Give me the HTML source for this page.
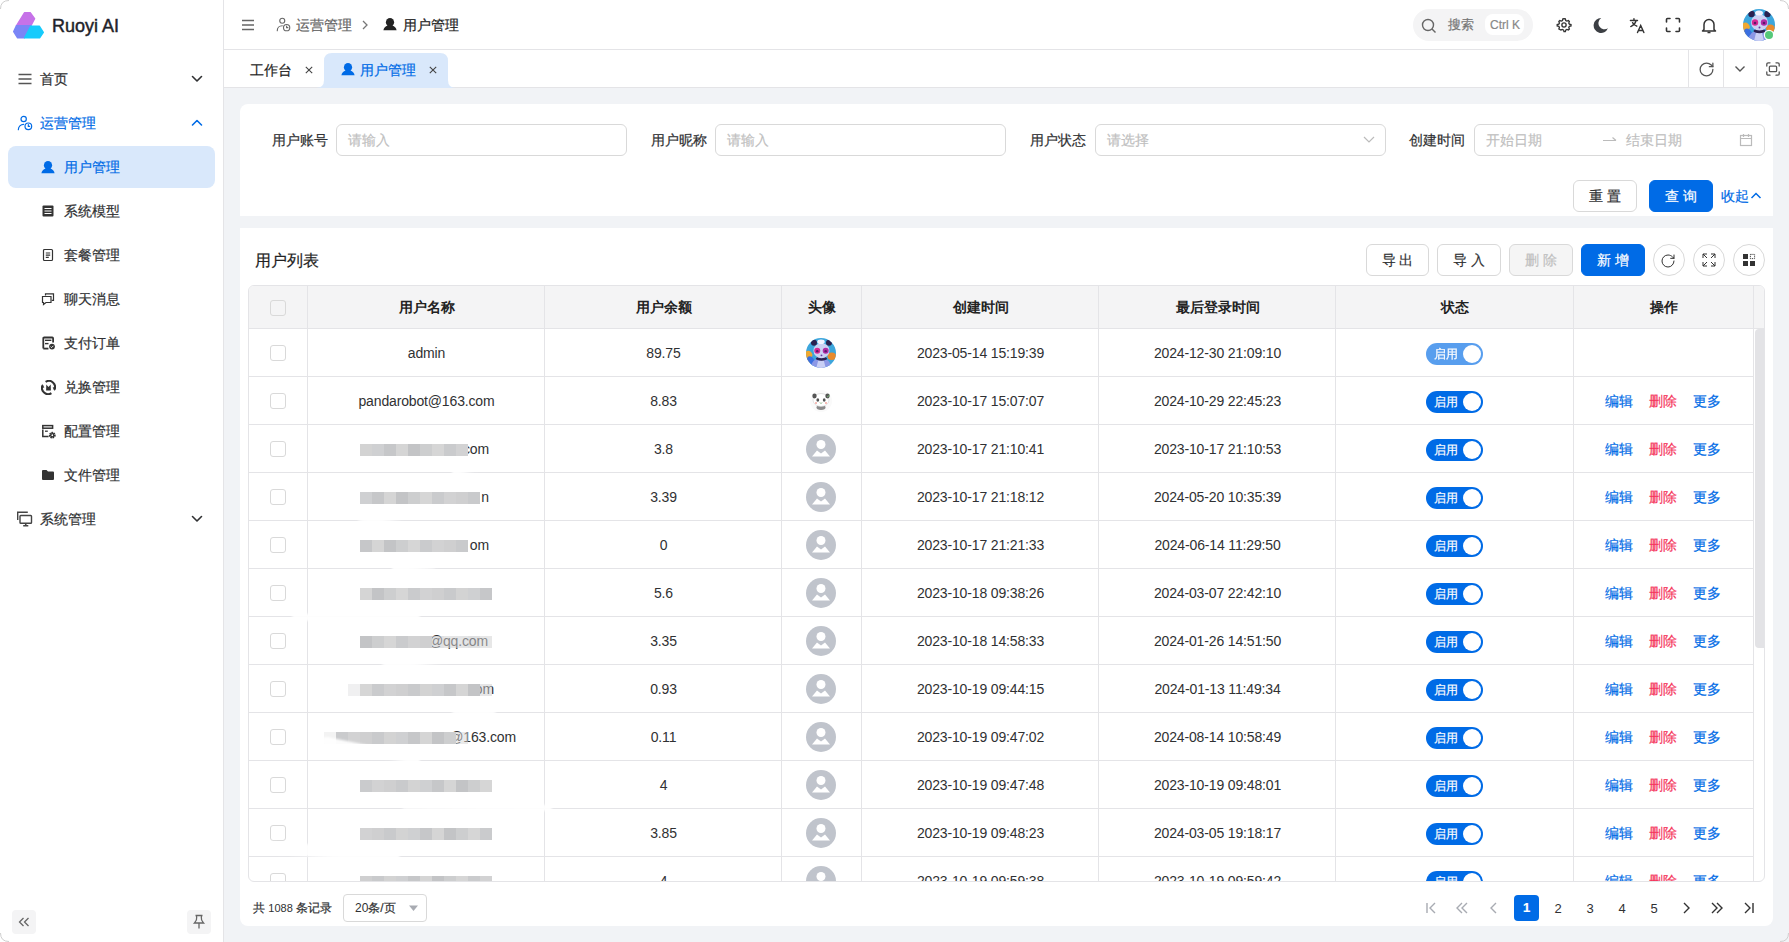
<!DOCTYPE html><html><head><meta charset="utf-8"><style>
*{box-sizing:border-box;margin:0;padding:0}
html,body{width:1789px;height:942px;overflow:hidden;background:#f1f3f6;font-family:"Liberation Sans",sans-serif;font-size:14px;color:#303133;-webkit-text-stroke:0.2px}
.a{position:absolute}
.t{position:absolute;white-space:nowrap;line-height:20px}
.side{left:0;top:0;width:224px;height:942px;background:#fff;border-right:1px solid #e4e4e7}
.hdr{left:224px;top:0;width:1565px;height:50px;background:#fff;border-bottom:1px solid #e4e4e7}
.tabs{left:224px;top:50px;width:1565px;height:38px;background:#fff;border-bottom:1px solid #e4e4e7}
.card{background:#fff}
.inp{position:absolute;height:32px;border:1px solid #d9d9d9;border-radius:6px;background:#fff}
.ph{color:#bfbfbf}
.btn{position:absolute;height:32px;border:1px solid #d9d9d9;border-radius:6px;background:#fff;text-align:center;line-height:30px;font-size:14px;color:#303133}
.btnp{background:#006be6;border-color:#006be6;color:#fff}
.cbtn{position:absolute;width:32px;height:32px;border:1px solid #d9d9d9;border-radius:50%;background:#fff}
.vl{position:absolute;width:1px;background:#e4e4e7}
.hl{position:absolute;height:1px;background:#e4e4e7}
.cb{position:absolute;width:16px;height:16px;border:1px solid #d9d9d9;border-radius:3px;background:#fff}
.cell{position:absolute;text-align:center;white-space:nowrap;line-height:20px}
.sw{position:absolute;width:57px;height:22px;border-radius:11px;background:#006be6}
.sw .k{position:absolute;right:2px;top:2px;width:18px;height:18px;border-radius:50%;background:#fff}
.sw .l{position:absolute;left:8px;top:0;line-height:22px;font-size:12px;color:#fff}
.lnk{position:absolute;white-space:nowrap;line-height:20px;color:#006be6}
.red{color:#f5365c}
.num{letter-spacing:-0.15px;-webkit-text-stroke:0}
.mos{position:absolute;height:12px;display:flex}
.mos i{display:block;width:12px;height:12px}
</style></head><body>
<div class="a side">
<svg class="a" style="left:0;top:0" width="50" height="45" viewBox="0 0 50 45" stroke-linejoin="round">
<path d="M24.6 12.6 L30.2 12.6 L34.6 18.6 L30.9 25.8 L16.4 25.8 Z" fill="#c672e8" stroke="#c672e8" stroke-width="1.4"/>
<path d="M16.4 25.8 L30.9 25.8 L24.2 37.9 L17.6 37.9 L13.7 31.6 Z" fill="#7a85f6" stroke="#7a85f6" stroke-width="1.4"/>
<path d="M30.9 26.2 L39.3 26.2 L43.3 32.3 L39.6 37.9 L24.6 37.9 Z" fill="#16cbfc" stroke="#16cbfc" stroke-width="1.4"/>
</svg>
<div class="t" style="left:52px;top:15px;font-size:18px;line-height:22px;color:#1f2329;-webkit-text-stroke:0.45px">Ruoyi AI</div>
<div class="a" style="left:17px;top:71px;width:16px;height:16px"><svg width="16" height="16" viewBox="0 0 16 16"><path d="M1.5 3.5h13M1.5 8h13M1.5 12.5h13" stroke="#555" stroke-width="1.6"/></svg></div>
<div class="t" style="left:40px;top:69px;color:#303133">首页</div>
<svg class="a" style="left:190px;top:73px" width="14" height="12" viewBox="0 0 14 12"><path d="M2.5 3.5 L7 8 L11.5 3.5" fill="none" stroke="#303133" stroke-width="1.6" stroke-linecap="round" stroke-linejoin="round"/></svg>
<div class="a" style="left:17px;top:115px;width:16px;height:16px"><svg width="16" height="16" viewBox="0 0 24 24" fill="none" stroke="#006be6" stroke-width="1.8" stroke-linecap="round"><circle cx="10" cy="6" r="4"/><path d="M2 22c0-4.5 3.5-8 8-8"/><circle cx="17" cy="17" r="5"/><path d="M17 14.5v2.5h2"/></svg></div>
<div class="t" style="left:40px;top:113px;color:#006be6">运营管理</div>
<svg class="a" style="left:190px;top:117px" width="14" height="12" viewBox="0 0 14 12"><path d="M2.5 8 L7 3.5 L11.5 8" fill="none" stroke="#006be6" stroke-width="1.6" stroke-linecap="round" stroke-linejoin="round"/></svg>
<div class="a" style="left:8px;top:146px;width:207px;height:42px;border-radius:8px;background:#d9e8fb"></div>
<div class="a" style="left:41px;top:160px"><svg width="14" height="14" viewBox="0 0 14 14"><ellipse cx="7" cy="5.3" rx="4.1" ry="4.3" fill="#006be6"/><path d="M0.4 13.2Q1.2 9.6 4.6 8.6L9.4 8.6Q12.8 9.6 13.6 13.2Z" fill="#006be6"/></svg></div>
<div class="t" style="left:64px;top:157px;color:#006be6">用户管理</div>
<div class="a" style="left:41px;top:204px;width:15px;height:15px"><svg width="14" height="14" viewBox="0 0 14 14"><rect x="1.5" y="1.5" width="11" height="11" rx="1" fill="#333"/><path d="M3.5 4.5h7M3.5 7h7M3.5 9.5h7" stroke="#fff" stroke-width="1"/></svg></div>
<div class="t" style="left:64px;top:201px">系统模型</div>
<div class="a" style="left:41px;top:248px;width:15px;height:15px"><svg width="14" height="14" viewBox="0 0 14 14" fill="none" stroke="#333" stroke-width="1.2"><rect x="2.5" y="1.5" width="9" height="11" rx="1"/><path d="M4.8 5h4.4M4.8 7.2h4.4M4.8 9.4h3"/></svg></div>
<div class="t" style="left:64px;top:245px">套餐管理</div>
<div class="a" style="left:41px;top:292px;width:15px;height:15px"><svg width="14" height="14" viewBox="0 0 14 14" fill="none" stroke="#333" stroke-width="1.2"><path d="M4.5 3.5V1.8h8v6.5h-1.8"/><path d="M1.5 4.5h8.5v6H5l-2.5 2v-2h-1z"/></svg></div>
<div class="t" style="left:64px;top:289px">聊天消息</div>
<div class="a" style="left:41px;top:336px;width:15px;height:15px"><svg width="15" height="14" viewBox="0 0 15 14"><path d="M2.3 12.6V2.4q0-0.9 0.9-0.9h8q0.9 0 0.9 0.9V6.5" fill="none" stroke="#333" stroke-width="1.8"/><path d="M2.3 12.6H7.5" stroke="#333" stroke-width="1.8"/><path d="M4 4.3H10.4" stroke="#333" stroke-width="1.4"/><path d="M4 7.6H7.5" stroke="#333" stroke-width="1.4"/><circle cx="11" cy="10.6" r="3.6" fill="#fff"/><circle cx="11" cy="10.6" r="2.9" fill="#333"/><path d="M9.6 10.6l1 1 1.8-1.8" stroke="#fff" stroke-width="0.9" fill="none"/></svg></div>
<div class="t" style="left:64px;top:333px">支付订单</div>
<div class="a" style="left:41px;top:380px;width:15px;height:15px"><svg width="15" height="15" viewBox="0 0 15 15" fill="none" stroke="#333"><path d="M4.6 1.9A6 6 0 0 1 13.3 9.6" stroke-width="2"/><path d="M10.4 13.1A6 6 0 0 1 1.7 5.4" stroke-width="2"/><path d="M12.2 7.6L13.6 10.4L14.9 7.6z" fill="#333" stroke-width="0.6"/><path d="M2.8 7.4L1.4 4.6L0.1 7.4z" fill="#333" stroke-width="0.6"/><path d="M5.3 4.6L7.5 7L9.7 4.6L9.9 10.6H5.1z" fill="#333" stroke="none"/></svg></div>
<div class="t" style="left:64px;top:377px">兑换管理</div>
<div class="a" style="left:41px;top:424px;width:15px;height:15px"><svg width="15" height="15" viewBox="0 0 15 15" fill="none" stroke="#333"><rect x="1.8" y="1.6" width="9.8" height="2.6" stroke-width="1.5"/><path d="M1.8 5.6V12.6H7.6" stroke-width="1.5"/><path d="M4 7.2H6.8" stroke-width="1.3"/><circle cx="11.3" cy="11.2" r="2.3" stroke-width="2.2" stroke-dasharray="1.25 0.55"/><circle cx="11.3" cy="11.2" r="1.6" stroke-width="1.3"/></svg></div>
<div class="t" style="left:64px;top:421px">配置管理</div>
<div class="a" style="left:41px;top:468px;width:15px;height:15px"><svg width="14" height="14" viewBox="0 0 14 14"><path d="M1 3q0-1 1-1h3.5l1.5 1.5h5q1 0 1 1v6.5q0 1-1 1h-10q-1 0-1-1z" fill="#333"/></svg></div>
<div class="t" style="left:64px;top:465px">文件管理</div>
<div class="a" style="left:17px;top:511px;width:16px;height:16px"><svg width="16" height="16" viewBox="0 0 16 16" fill="none" stroke="#444" stroke-width="1.4"><path d="M0.7 9V1.2H10.8"/><rect x="3" y="4.5" width="11.5" height="7.8" rx="0.8"/><path d="M8.75 12.3V14.6M6.2 14.8H11.3" stroke-width="1.6"/></svg></div>
<div class="t" style="left:40px;top:509px;color:#303133">系统管理</div>
<svg class="a" style="left:190px;top:513px" width="14" height="12" viewBox="0 0 14 12"><path d="M2.5 3.5 L7 8 L11.5 3.5" fill="none" stroke="#303133" stroke-width="1.6" stroke-linecap="round" stroke-linejoin="round"/></svg>
<div class="a" style="left:12px;top:910px;width:24px;height:24px;border-radius:4px;background:#f4f4f5"></div>
<svg class="a" style="left:17px;top:916px" width="14" height="12" viewBox="0 0 14 12"><path d="M6.5 2L2.5 6l4 4M11.5 2L7.5 6l4 4" fill="none" stroke="#666" stroke-width="1.3"/></svg>
<div class="a" style="left:187px;top:910px;width:24px;height:24px;border-radius:4px;background:#f4f4f5"></div>
<svg class="a" style="left:192px;top:914px" width="14" height="16" viewBox="0 0 14 16"><path d="M3.5 1.5h7M4.5 1.5c0 3 1.5 4-2 7.5h9c-3.5-3.5-2-4.5-2-7.5M7 9v5.5" fill="none" stroke="#666" stroke-width="1.3"/></svg>
</div>
<div class="a hdr"></div>
<svg class="a" style="left:241px;top:18px" width="14" height="14" viewBox="0 0 14 14"><path d="M1 2.5h12M1 7h12M1 11.5h12" stroke="#666" stroke-width="1.5"/></svg>
<div class="a" style="left:276px;top:17px"><svg width="15" height="15" viewBox="0 0 24 24" fill="none" stroke="#666" stroke-width="1.8" stroke-linecap="round"><circle cx="10" cy="6" r="4"/><path d="M2 22c0-4.5 3.5-8 8-8"/><circle cx="17" cy="17" r="5"/><path d="M17 14.5v2.5h2"/></svg></div>
<div class="t" style="left:296px;top:15px;color:#666">运营管理</div>
<svg class="a" style="left:359px;top:18px" width="12" height="14" viewBox="0 0 12 14"><path d="M4 3l4 4-4 4" fill="none" stroke="#777" stroke-width="1.3"/></svg>
<div class="a" style="left:383px;top:17px"><svg width="14" height="14" viewBox="0 0 14 14"><ellipse cx="7" cy="5.3" rx="4.1" ry="4.3" fill="#222"/><path d="M0.4 13.2Q1.2 9.6 4.6 8.6L9.4 8.6Q12.8 9.6 13.6 13.2Z" fill="#222"/></svg></div>
<div class="t" style="left:403px;top:15px;color:#222">用户管理</div>
<div class="a" style="left:1413px;top:9px;width:120px;height:32px;border-radius:16px;background:#f4f4f5"></div>
<svg class="a" style="left:1421px;top:18px" width="16" height="16" viewBox="0 0 16 16"><circle cx="7" cy="7" r="5.5" fill="none" stroke="#666" stroke-width="1.4"/><path d="M11 11l3.5 3.5" stroke="#666" stroke-width="1.4"/></svg>
<div class="t" style="left:1448px;top:15px;font-size:13px;color:#777">搜索</div>
<div class="a" style="left:1485px;top:14px;width:39px;height:21px;border-radius:8px;background:#fff"></div>
<div class="t" style="left:1490px;top:15px;font-size:12px;color:#888">Ctrl K</div>
<svg class="a" style="left:1556px;top:17px" width="16" height="16" viewBox="0 0 24 24" fill="none" stroke="#333" stroke-width="2"><path d="M12 2.5l2 .3.6 2.4 1.6.9 2.4-.8 1.4 1.5-.8 2.4.9 1.6 2.4.6v2l-2.4.6-.9 1.6.8 2.4-1.4 1.5-2.4-.8-1.6.9-.6 2.4h-2l-.6-2.4-1.6-.9-2.4.8L4.3 18l.8-2.4-.9-1.6L1.8 13.4v-2l2.4-.6.9-1.6-.8-2.4L5.7 5.3l2.4.8 1.6-.9.6-2.4z"/><circle cx="12" cy="12" r="3.2"/></svg>
<svg class="a" style="left:1592px;top:17px" width="17" height="17" viewBox="0 0 24 24"><path d="M13 1.5A10.5 10.5 0 1 0 22.5 16 A8.5 8.5 0 0 1 13 1.5z" fill="#3c3f44"/></svg>
<svg class="a" style="left:1629px;top:17px" width="17" height="17" viewBox="0 0 24 24" fill="none" stroke="#333" stroke-width="2" stroke-linecap="round"><path d="M2 5h10M7 2.5V5M10 5c-1 4-4 7-7.5 8.5M5 8c1.5 2.5 3.5 4 6 5"/><path d="M12 22l4.5-10 4.5 10M13.5 19h6"/></svg>
<svg class="a" style="left:1665px;top:17px" width="16" height="16" viewBox="0 0 16 16" fill="none" stroke="#333" stroke-width="1.6" stroke-linecap="round"><path d="M1.5 5V2.5q0-1 1-1H5M11 1.5h2.5q1 0 1 1V5M14.5 11v2.5q0 1-1 1H11M5 14.5H2.5q-1 0-1-1V11"/></svg>
<svg class="a" style="left:1701px;top:17px" width="16" height="17" viewBox="0 0 16 17" fill="none" stroke="#333" stroke-width="1.5" stroke-linejoin="round"><path d="M3 12.5V7.5a5 5 0 0 1 10 0v5l1.5 1.5h-13z"/><path d="M6.5 15.5h3"/></svg>
<svg class="a" style="left:1743px;top:9px" width="32" height="32" viewBox="0 0 32 32"><defs><clipPath id="hav"><circle cx="16" cy="16" r="16"/></clipPath></defs><g clip-path="url(#hav)"><rect width="32" height="32" fill="#3da6dc"/><path d="M0 14 Q5 12 7 18 Q4 24 2 32 H0z" fill="#f0a830"/><path d="M2 20 Q6 18 9 24 L6 32 H0 V24z" fill="#3a6fe0"/><ellipse cx="27.5" cy="19.5" rx="4.5" ry="4" fill="#e98a2c"/><path d="M5 32 Q6 22 16 21 Q26 22 27 32z" fill="#8b97e6"/><path d="M11 32 L13 24 L19 24 L21 32z" fill="#c9cff5"/><ellipse cx="16.5" cy="22" rx="6" ry="2.2" fill="#2b2150"/><ellipse cx="16.5" cy="13.5" rx="8.5" ry="8" fill="#ccd1f3"/><circle cx="8.5" cy="5" r="3.2" fill="#2b2150"/><circle cx="24.5" cy="5" r="3.2" fill="#2b2150"/><ellipse cx="16" cy="4" rx="4" ry="2.5" fill="#f2f3ff"/><circle cx="12" cy="13.5" r="3.2" fill="#d62996"/><circle cx="21" cy="13.5" r="3.2" fill="#b02ca6"/><circle cx="12" cy="14" r="1.3" fill="#5a1a6a"/><circle cx="21" cy="14" r="1.3" fill="#5a1a6a"/><circle cx="16.5" cy="18.5" r="1" fill="#6a3aa0"/></g></svg><svg class="a" style="left:1763px;top:29px" width="12" height="12" viewBox="0 0 12 12"><circle cx="6" cy="6" r="5.2" fill="#fff"/><circle cx="6" cy="6" r="4" fill="#55c97a"/></svg>
<div class="a tabs"></div>
<div class="t" style="left:250px;top:60px;color:#222">工作台</div>
<svg class="a" style="left:305px;top:66px" width="8" height="8" viewBox="0 0 8 8"><path d="M0.8 0.8l6.4 6.4M7.2 0.8l-6.4 6.4" stroke="#444" stroke-width="1.1"/></svg>
<svg class="a" style="left:316px;top:53px" width="140" height="35" viewBox="0 0 140 35"><path d="M0 35 Q8 35 8 27 V8 Q8 0 16 0 H124 Q132 0 132 8 V27 Q132 35 140 35 Z" fill="#d9e8fb"/></svg>
<div class="a" style="left:341px;top:62px"><svg width="14" height="14" viewBox="0 0 14 14"><ellipse cx="7" cy="5.3" rx="4.1" ry="4.3" fill="#006be6"/><path d="M0.4 13.2Q1.2 9.6 4.6 8.6L9.4 8.6Q12.8 9.6 13.6 13.2Z" fill="#006be6"/></svg></div>
<div class="t" style="left:360px;top:60px;color:#006be6">用户管理</div>
<svg class="a" style="left:429px;top:66px" width="8" height="8" viewBox="0 0 8 8"><path d="M0.8 0.8l6.4 6.4M7.2 0.8l-6.4 6.4" stroke="#444" stroke-width="1.1"/></svg>
<div class="vl" style="left:1688px;top:50px;height:37px"></div>
<div class="vl" style="left:1723px;top:50px;height:37px"></div>
<div class="vl" style="left:1756px;top:50px;height:37px"></div>
<svg class="a" style="left:1698px;top:61px" width="17" height="17" viewBox="0 0 24 24" fill="none" stroke="#555" stroke-width="1.8" stroke-linecap="round" stroke-linejoin="round"><path d="M21 12a9 9 0 1 1-9-9c2.52 0 4.93 1 6.74 2.74L21 8"/><path d="M21 3v5h-5"/></svg>
<svg class="a" style="left:1733px;top:63px" width="14" height="12" viewBox="0 0 14 12"><path d="M2.5 3.5L7 8l4.5-4.5" fill="none" stroke="#555" stroke-width="1.4"/></svg>
<svg class="a" style="left:1766px;top:62px" width="14" height="14" viewBox="0 0 14 14" fill="none" stroke="#555" stroke-width="1.3" stroke-linecap="round"><path d="M0.8 4V2.3Q0.8 0.8 2.3 0.8H4M10 0.8h1.7q1.5 0 1.5 1.5V4M13.2 10v1.7q0 1.5-1.5 1.5H10M4 13.2H2.3Q0.8 13.2 0.8 11.7V10"/><rect x="3.4" y="4.1" width="7.2" height="5.6" rx="1"/></svg>
<div class="a card" style="left:240px;top:104px;width:1533px;height:112px;border-radius:8px 8px 0 0"></div>
<div class="t" style="left:272px;top:130px">用户账号</div>
<div class="inp" style="left:336px;top:124px;width:291px"></div>
<div class="t ph" style="left:348px;top:130px">请输入</div>
<div class="t" style="left:651px;top:130px">用户昵称</div>
<div class="inp" style="left:715px;top:124px;width:291px"></div>
<div class="t ph" style="left:727px;top:130px">请输入</div>
<div class="t" style="left:1030px;top:130px">用户状态</div>
<div class="inp" style="left:1095px;top:124px;width:291px"></div>
<div class="t ph" style="left:1107px;top:130px">请选择</div>
<div class="t" style="left:1409px;top:130px">创建时间</div>
<div class="inp" style="left:1474px;top:124px;width:291px"></div>
<svg class="a" style="left:1362px;top:134px" width="14" height="12" viewBox="0 0 14 12"><path d="M2 3l5 5 5-5" fill="none" stroke="#bbb" stroke-width="1.2"/></svg>
<div class="t ph" style="left:1486px;top:130px">开始日期</div>
<svg class="a" style="left:1602px;top:135px" width="16" height="10" viewBox="0 0 16 10"><path d="M1 5.5h13M10.5 2.5L14 5.5" fill="none" stroke="#bbb" stroke-width="1.2"/></svg>
<div class="t ph" style="left:1626px;top:130px">结束日期</div>
<svg class="a" style="left:1739px;top:133px" width="14" height="14" viewBox="0 0 14 14" fill="none" stroke="#bbb" stroke-width="1.2"><rect x="1.5" y="2.5" width="11" height="10"/><path d="M1.5 5.5h11M4.5 1v3M9.5 1v3"/></svg>
<div class="btn" style="left:1573px;top:180px;width:64px">重 置</div>
<div class="btn btnp" style="left:1649px;top:180px;width:64px">查 询</div>
<div class="t" style="left:1721px;top:186px;color:#006be6">收起</div>
<svg class="a" style="left:1749px;top:190px" width="14" height="12" viewBox="0 0 14 12"><path d="M2.5 8L7 3.5 11.5 8" fill="none" stroke="#006be6" stroke-width="1.5"/></svg>
<div class="a card" style="left:240px;top:228px;width:1533px;height:698px;border-radius:0 0 8px 8px"></div>
<div class="t" style="left:255px;top:250px;font-size:16px;line-height:22px;color:#222">用户列表</div>
<div class="btn" style="left:1366px;top:244px;width:63px">导 出</div>
<div class="btn" style="left:1437px;top:244px;width:64px">导 入</div>
<div class="btn" style="left:1509px;top:244px;width:64px;background:#f5f5f5;color:#bfbfbf">删 除</div>
<div class="btn btnp" style="left:1581px;top:244px;width:64px">新 增</div>
<div class="cbtn" style="left:1653px;top:244px"></div>
<div class="cbtn" style="left:1693px;top:244px"></div>
<div class="cbtn" style="left:1733px;top:244px"></div>
<svg class="a" style="left:1660px;top:253px" width="16" height="16" viewBox="0 0 24 24" fill="none" stroke="#333" stroke-width="1.5" stroke-linecap="round" stroke-linejoin="round"><path d="M21 12a9 9 0 1 1-9-9c2.52 0 4.93 1 6.74 2.74L21 8"/><path d="M21 3v5h-5"/></svg>
<svg class="a" style="left:1701px;top:252px" width="16" height="16" viewBox="0 0 16 16" fill="none" stroke="#333" stroke-width="1"><path d="M2 6V2h4M2 2l4 4M10 2h4v4M14 2l-4 4M14 10v4h-4M14 14l-4-4M6 14H2v-4M2 14l4-4"/></svg>
<svg class="a" style="left:1741px;top:252px" width="16" height="16" viewBox="0 0 16 16"><rect x="2" y="2" width="5" height="5" fill="#333"/><rect x="2" y="9" width="5" height="5" fill="#333"/><rect x="9" y="9" width="5" height="5" fill="#333"/><rect x="9.4" y="2.4" width="4.2" height="4.2" fill="none" stroke="#333" stroke-width="0.9" stroke-dasharray="1.2 0.8"/></svg>
<div class="a" style="left:248px;top:285px;width:1517px;height:597px;border:1px solid #e4e4e7;border-radius:6px;overflow:hidden;background:#fff">
<div class="a" style="left:0;top:0;width:100%;height:42px;background:#f4f4f5"></div>
<div class="hl" style="left:0;top:42px;width:100%"></div>
<div class="vl" style="left:58px;top:0;height:597px"></div>
<div class="vl" style="left:295px;top:0;height:597px"></div>
<div class="vl" style="left:532px;top:0;height:597px"></div>
<div class="vl" style="left:612px;top:0;height:597px"></div>
<div class="vl" style="left:849px;top:0;height:597px"></div>
<div class="vl" style="left:1086px;top:0;height:597px"></div>
<div class="vl" style="left:1324px;top:0;height:597px"></div>
<div class="vl" style="left:1504px;top:0;height:597px"></div>
<div class="cell" style="left:59px;top:11px;width:237px;font-weight:bold;color:#222;-webkit-text-stroke:0">用户名称</div>
<div class="cell" style="left:296px;top:11px;width:237px;font-weight:bold;color:#222;-webkit-text-stroke:0">用户余额</div>
<div class="cell" style="left:533px;top:11px;width:80px;font-weight:bold;color:#222;-webkit-text-stroke:0">头像</div>
<div class="cell" style="left:613px;top:11px;width:237px;font-weight:bold;color:#222;-webkit-text-stroke:0">创建时间</div>
<div class="cell" style="left:850px;top:11px;width:237px;font-weight:bold;color:#222;-webkit-text-stroke:0">最后登录时间</div>
<div class="cell" style="left:1087px;top:11px;width:238px;font-weight:bold;color:#222;-webkit-text-stroke:0">状态</div>
<div class="cell" style="left:1325px;top:11px;width:180px;font-weight:bold;color:#222;-webkit-text-stroke:0">操作</div>
<div class="cb" style="left:21px;top:14px;background:#f4f4f5"></div>
<div class="a" style="left:1506px;top:43px;width:10px;height:319px;border-radius:4px 0 0 4px;background:#e3e3e6"></div>
<div class="hl" style="left:0;top:90px;width:1504px"></div>
<div class="cb" style="left:21px;top:59px"></div>
<div class="cell num" style="left:59px;top:57px;width:237px">admin</div>
<div class="cell num" style="left:296px;top:57px;width:237px">89.75</div>
<svg class="a" style="left:557px;top:52px" width="30" height="30" viewBox="0 0 32 32"><defs><clipPath id="tav"><circle cx="16" cy="16" r="16"/></clipPath></defs><g clip-path="url(#tav)"><rect width="32" height="32" fill="#3da6dc"/><path d="M0 14 Q5 12 7 18 Q4 24 2 32 H0z" fill="#f0a830"/><path d="M2 20 Q6 18 9 24 L6 32 H0 V24z" fill="#3a6fe0"/><ellipse cx="27.5" cy="19.5" rx="4.5" ry="4" fill="#e98a2c"/><path d="M5 32 Q6 22 16 21 Q26 22 27 32z" fill="#8b97e6"/><path d="M11 32 L13 24 L19 24 L21 32z" fill="#c9cff5"/><ellipse cx="16.5" cy="22" rx="6" ry="2.2" fill="#2b2150"/><ellipse cx="16.5" cy="13.5" rx="8.5" ry="8" fill="#ccd1f3"/><circle cx="8.5" cy="5" r="3.2" fill="#2b2150"/><circle cx="24.5" cy="5" r="3.2" fill="#2b2150"/><ellipse cx="16" cy="4" rx="4" ry="2.5" fill="#f2f3ff"/><circle cx="12" cy="13.5" r="3.2" fill="#d62996"/><circle cx="21" cy="13.5" r="3.2" fill="#b02ca6"/><circle cx="12" cy="14" r="1.3" fill="#5a1a6a"/><circle cx="21" cy="14" r="1.3" fill="#5a1a6a"/><circle cx="16.5" cy="18.5" r="1" fill="#6a3aa0"/></g></svg>
<div class="cell num" style="left:613px;top:57px;width:237px">2023-05-14 15:19:39</div>
<div class="cell num" style="left:850px;top:57px;width:237px">2024-12-30 21:09:10</div>
<div class="sw" style="left:1177px;top:57px;opacity:0.65;"><span class="l">启用</span><span class="k"></span></div>
<div class="hl" style="left:0;top:138px;width:1504px"></div>
<div class="cb" style="left:21px;top:107px"></div>
<div class="cell num" style="left:59px;top:105px;width:237px">pandarobot@163.com</div>
<div class="cell num" style="left:296px;top:105px;width:237px">8.83</div>
<svg class="a" style="left:561px;top:104px" width="22" height="22" viewBox="0 0 22 22"><circle cx="11" cy="11" r="11" fill="#fafafa"/><ellipse cx="11" cy="17.5" rx="4.5" ry="2.4" fill="#8a8a8a"/><ellipse cx="11" cy="10" rx="8" ry="6.5" fill="#fff" stroke="#d0d0d0" stroke-width="0.6"/><ellipse cx="4.5" cy="6" rx="2.2" ry="2.4" fill="#555"/><ellipse cx="17.5" cy="6" rx="2.2" ry="2.4" fill="#555"/><ellipse cx="7.8" cy="10" rx="1.4" ry="1.7" fill="#555"/><ellipse cx="14.2" cy="10" rx="1.4" ry="1.7" fill="#555"/><circle cx="6" cy="13" r="1" fill="#f3a8a0"/><circle cx="16" cy="13" r="1" fill="#f3a8a0"/><path d="M10 12.5 L11 13.5 L12 12.5" stroke="#3a8a3a" stroke-width="0.7" fill="none"/><path d="M17 7 L20 5" stroke="#7ac47a" stroke-width="0.8"/></svg>
<div class="cell num" style="left:613px;top:105px;width:237px">2023-10-17 15:07:07</div>
<div class="cell num" style="left:850px;top:105px;width:237px">2024-10-29 22:45:23</div>
<div class="sw" style="left:1177px;top:105px;"><span class="l">启用</span><span class="k"></span></div>
<div class="lnk" style="left:1356px;top:105px">编辑</div>
<div class="lnk red" style="left:1400px;top:105px">删除</div>
<div class="lnk" style="left:1444px;top:105px">更多</div>
<div class="hl" style="left:0;top:186px;width:1504px"></div>
<div class="cb" style="left:21px;top:155px"></div>
<div class="t num" style="left:-60px;top:153px;width:300px;text-align:right">com</div>
<div class="mos" style="left:111px;top:158px;opacity:1"><i style="background:#d3d3d3"></i><i style="background:#cfd0d2"></i><i style="background:#c6c7c9"></i><i style="background:#d5d5d5"></i><i style="background:#c3c4c6"></i><i style="background:#cdcecf"></i><i style="background:#d6d6d6"></i><i style="background:#cacbcd"></i><i style="background:#d2d2d3"></i></div>
<div class="cell num" style="left:296px;top:153px;width:237px">3.8</div>
<svg class="a" style="left:557px;top:148px" width="30" height="30" viewBox="0 0 30 30"><circle cx="15" cy="15" r="15" fill="#c0c4cc"/><circle cx="15" cy="10.5" r="4.5" fill="#fff"/><path d="M6 22.5 L11 16.5 L15 19.5 L19 16.5 L24 22.5 Z" fill="#fff"/></svg>
<div class="cell num" style="left:613px;top:153px;width:237px">2023-10-17 21:10:41</div>
<div class="cell num" style="left:850px;top:153px;width:237px">2023-10-17 21:10:53</div>
<div class="sw" style="left:1177px;top:153px;"><span class="l">启用</span><span class="k"></span></div>
<div class="lnk" style="left:1356px;top:153px">编辑</div>
<div class="lnk red" style="left:1400px;top:153px">删除</div>
<div class="lnk" style="left:1444px;top:153px">更多</div>
<div class="hl" style="left:0;top:234px;width:1504px"></div>
<div class="cb" style="left:21px;top:203px"></div>
<div class="t num" style="left:-60px;top:201px;width:300px;text-align:right">n</div>
<div class="mos" style="left:111px;top:206px;opacity:1"><i style="background:#cfd0d2"></i><i style="background:#c6c7c9"></i><i style="background:#d5d5d5"></i><i style="background:#c3c4c6"></i><i style="background:#cdcecf"></i><i style="background:#d6d6d6"></i><i style="background:#cacbcd"></i><i style="background:#d2d2d3"></i><i style="background:#cfcfd0"></i><i style="background:#c9cacc"></i></div>
<div class="cell num" style="left:296px;top:201px;width:237px">3.39</div>
<svg class="a" style="left:557px;top:196px" width="30" height="30" viewBox="0 0 30 30"><circle cx="15" cy="15" r="15" fill="#c0c4cc"/><circle cx="15" cy="10.5" r="4.5" fill="#fff"/><path d="M6 22.5 L11 16.5 L15 19.5 L19 16.5 L24 22.5 Z" fill="#fff"/></svg>
<div class="cell num" style="left:613px;top:201px;width:237px">2023-10-17 21:18:12</div>
<div class="cell num" style="left:850px;top:201px;width:237px">2024-05-20 10:35:39</div>
<div class="sw" style="left:1177px;top:201px;"><span class="l">启用</span><span class="k"></span></div>
<div class="lnk" style="left:1356px;top:201px">编辑</div>
<div class="lnk red" style="left:1400px;top:201px">删除</div>
<div class="lnk" style="left:1444px;top:201px">更多</div>
<div class="hl" style="left:0;top:282px;width:1504px"></div>
<div class="cb" style="left:21px;top:251px"></div>
<div class="t num" style="left:-60px;top:249px;width:300px;text-align:right">om</div>
<div class="mos" style="left:111px;top:254px;opacity:1"><i style="background:#c6c7c9"></i><i style="background:#d5d5d5"></i><i style="background:#c3c4c6"></i><i style="background:#cdcecf"></i><i style="background:#d6d6d6"></i><i style="background:#cacbcd"></i><i style="background:#d2d2d3"></i><i style="background:#cfcfd0"></i><i style="background:#c9cacc"></i></div>
<div class="cell num" style="left:296px;top:249px;width:237px">0</div>
<svg class="a" style="left:557px;top:244px" width="30" height="30" viewBox="0 0 30 30"><circle cx="15" cy="15" r="15" fill="#c0c4cc"/><circle cx="15" cy="10.5" r="4.5" fill="#fff"/><path d="M6 22.5 L11 16.5 L15 19.5 L19 16.5 L24 22.5 Z" fill="#fff"/></svg>
<div class="cell num" style="left:613px;top:249px;width:237px">2023-10-17 21:21:33</div>
<div class="cell num" style="left:850px;top:249px;width:237px">2024-06-14 11:29:50</div>
<div class="sw" style="left:1177px;top:249px;"><span class="l">启用</span><span class="k"></span></div>
<div class="lnk" style="left:1356px;top:249px">编辑</div>
<div class="lnk red" style="left:1400px;top:249px">删除</div>
<div class="lnk" style="left:1444px;top:249px">更多</div>
<div class="hl" style="left:0;top:330px;width:1504px"></div>
<div class="cb" style="left:21px;top:299px"></div>
<div class="mos" style="left:111px;top:302px;opacity:1"><i style="background:#d5d5d5"></i><i style="background:#c3c4c6"></i><i style="background:#cdcecf"></i><i style="background:#d6d6d6"></i><i style="background:#cacbcd"></i><i style="background:#d2d2d3"></i><i style="background:#cfcfd0"></i><i style="background:#c9cacc"></i><i style="background:#d3d3d3"></i><i style="background:#cfd0d2"></i><i style="background:#c6c7c9"></i></div>
<div class="cell num" style="left:296px;top:297px;width:237px">5.6</div>
<svg class="a" style="left:557px;top:292px" width="30" height="30" viewBox="0 0 30 30"><circle cx="15" cy="15" r="15" fill="#c0c4cc"/><circle cx="15" cy="10.5" r="4.5" fill="#fff"/><path d="M6 22.5 L11 16.5 L15 19.5 L19 16.5 L24 22.5 Z" fill="#fff"/></svg>
<div class="cell num" style="left:613px;top:297px;width:237px">2023-10-18 09:38:26</div>
<div class="cell num" style="left:850px;top:297px;width:237px">2024-03-07 22:42:10</div>
<div class="sw" style="left:1177px;top:297px;"><span class="l">启用</span><span class="k"></span></div>
<div class="lnk" style="left:1356px;top:297px">编辑</div>
<div class="lnk red" style="left:1400px;top:297px">删除</div>
<div class="lnk" style="left:1444px;top:297px">更多</div>
<div class="hl" style="left:0;top:378px;width:1504px"></div>
<div class="cb" style="left:21px;top:347px"></div>
<div class="t num" style="left:-61px;top:345px;width:300px;text-align:right">@qq.com</div>
<div class="mos" style="left:111px;top:350px;opacity:1"><i style="background:#c3c4c6"></i><i style="background:#cdcecf"></i><i style="background:#d6d6d6"></i><i style="background:#cacbcd"></i><i style="background:#d2d2d3"></i><i style="background:#cfcfd0"></i></div>
<div class="mos" style="left:183px;top:350px;opacity:0.55"><i style="background:#c9cacc"></i><i style="background:#d3d3d3"></i><i style="background:#cfd0d2"></i><i style="background:#c6c7c9"></i><i style="background:#d5d5d5"></i></div>
<div class="cell num" style="left:296px;top:345px;width:237px">3.35</div>
<svg class="a" style="left:557px;top:340px" width="30" height="30" viewBox="0 0 30 30"><circle cx="15" cy="15" r="15" fill="#c0c4cc"/><circle cx="15" cy="10.5" r="4.5" fill="#fff"/><path d="M6 22.5 L11 16.5 L15 19.5 L19 16.5 L24 22.5 Z" fill="#fff"/></svg>
<div class="cell num" style="left:613px;top:345px;width:237px">2023-10-18 14:58:33</div>
<div class="cell num" style="left:850px;top:345px;width:237px">2024-01-26 14:51:50</div>
<div class="sw" style="left:1177px;top:345px;"><span class="l">启用</span><span class="k"></span></div>
<div class="lnk" style="left:1356px;top:345px">编辑</div>
<div class="lnk red" style="left:1400px;top:345px">删除</div>
<div class="lnk" style="left:1444px;top:345px">更多</div>
<div class="hl" style="left:0;top:426px;width:1504px"></div>
<div class="cb" style="left:21px;top:395px"></div>
<div class="t num" style="left:-55px;top:393px;width:300px;text-align:right">om</div>
<div class="mos" style="left:99px;top:398px;opacity:0.3"><i style="background:#cdcecf"></i></div>
<div class="mos" style="left:111px;top:398px;opacity:1"><i style="background:#d6d6d6"></i><i style="background:#cacbcd"></i><i style="background:#d2d2d3"></i><i style="background:#cfcfd0"></i><i style="background:#c9cacc"></i><i style="background:#d3d3d3"></i><i style="background:#cfd0d2"></i><i style="background:#c6c7c9"></i><i style="background:#d5d5d5"></i><i style="background:#c3c4c6"></i></div>
<div class="mos" style="left:231px;top:398px;opacity:0.5"><i style="background:#cdcecf"></i></div>
<div class="cell num" style="left:296px;top:393px;width:237px">0.93</div>
<svg class="a" style="left:557px;top:388px" width="30" height="30" viewBox="0 0 30 30"><circle cx="15" cy="15" r="15" fill="#c0c4cc"/><circle cx="15" cy="10.5" r="4.5" fill="#fff"/><path d="M6 22.5 L11 16.5 L15 19.5 L19 16.5 L24 22.5 Z" fill="#fff"/></svg>
<div class="cell num" style="left:613px;top:393px;width:237px">2023-10-19 09:44:15</div>
<div class="cell num" style="left:850px;top:393px;width:237px">2024-01-13 11:49:34</div>
<div class="sw" style="left:1177px;top:393px;"><span class="l">启用</span><span class="k"></span></div>
<div class="lnk" style="left:1356px;top:393px">编辑</div>
<div class="lnk red" style="left:1400px;top:393px">删除</div>
<div class="lnk" style="left:1444px;top:393px">更多</div>
<div class="hl" style="left:0;top:474px;width:1504px"></div>
<div class="cb" style="left:21px;top:443px"></div>
<div class="t num" style="left:-33px;top:441px;width:300px;text-align:right">@163.com</div>
<div class="mos" style="left:75px;top:446px;opacity:0.3"><i style="background:#d6d6d6"></i></div>
<div class="mos" style="left:87px;top:446px;opacity:1"><i style="background:#cacbcd"></i><i style="background:#d2d2d3"></i><i style="background:#cfcfd0"></i><i style="background:#c9cacc"></i><i style="background:#d3d3d3"></i><i style="background:#cfd0d2"></i><i style="background:#c6c7c9"></i><i style="background:#d5d5d5"></i><i style="background:#c3c4c6"></i><i style="background:#cdcecf"></i></div>
<div class="mos" style="left:207px;top:446px;opacity:0.5"><i style="background:#d6d6d6"></i></div>
<div class="cell num" style="left:296px;top:441px;width:237px">0.11</div>
<svg class="a" style="left:557px;top:436px" width="30" height="30" viewBox="0 0 30 30"><circle cx="15" cy="15" r="15" fill="#c0c4cc"/><circle cx="15" cy="10.5" r="4.5" fill="#fff"/><path d="M6 22.5 L11 16.5 L15 19.5 L19 16.5 L24 22.5 Z" fill="#fff"/></svg>
<div class="cell num" style="left:613px;top:441px;width:237px">2023-10-19 09:47:02</div>
<div class="cell num" style="left:850px;top:441px;width:237px">2024-08-14 10:58:49</div>
<div class="sw" style="left:1177px;top:441px;"><span class="l">启用</span><span class="k"></span></div>
<div class="lnk" style="left:1356px;top:441px">编辑</div>
<div class="lnk red" style="left:1400px;top:441px">删除</div>
<div class="lnk" style="left:1444px;top:441px">更多</div>
<div class="hl" style="left:0;top:522px;width:1504px"></div>
<div class="cb" style="left:21px;top:491px"></div>
<div class="mos" style="left:111px;top:494px;opacity:1"><i style="background:#cacbcd"></i><i style="background:#d2d2d3"></i><i style="background:#cfcfd0"></i><i style="background:#c9cacc"></i><i style="background:#d3d3d3"></i><i style="background:#cfd0d2"></i><i style="background:#c6c7c9"></i><i style="background:#d5d5d5"></i><i style="background:#c3c4c6"></i><i style="background:#cdcecf"></i><i style="background:#d6d6d6"></i></div>
<div class="cell num" style="left:296px;top:489px;width:237px">4</div>
<svg class="a" style="left:557px;top:484px" width="30" height="30" viewBox="0 0 30 30"><circle cx="15" cy="15" r="15" fill="#c0c4cc"/><circle cx="15" cy="10.5" r="4.5" fill="#fff"/><path d="M6 22.5 L11 16.5 L15 19.5 L19 16.5 L24 22.5 Z" fill="#fff"/></svg>
<div class="cell num" style="left:613px;top:489px;width:237px">2023-10-19 09:47:48</div>
<div class="cell num" style="left:850px;top:489px;width:237px">2023-10-19 09:48:01</div>
<div class="sw" style="left:1177px;top:489px;"><span class="l">启用</span><span class="k"></span></div>
<div class="lnk" style="left:1356px;top:489px">编辑</div>
<div class="lnk red" style="left:1400px;top:489px">删除</div>
<div class="lnk" style="left:1444px;top:489px">更多</div>
<div class="hl" style="left:0;top:570px;width:1504px"></div>
<div class="cb" style="left:21px;top:539px"></div>
<div class="mos" style="left:111px;top:542px;opacity:1"><i style="background:#d2d2d3"></i><i style="background:#cfcfd0"></i><i style="background:#c9cacc"></i><i style="background:#d3d3d3"></i><i style="background:#cfd0d2"></i><i style="background:#c6c7c9"></i><i style="background:#d5d5d5"></i><i style="background:#c3c4c6"></i><i style="background:#cdcecf"></i><i style="background:#d6d6d6"></i><i style="background:#cacbcd"></i></div>
<div class="cell num" style="left:296px;top:537px;width:237px">3.85</div>
<svg class="a" style="left:557px;top:532px" width="30" height="30" viewBox="0 0 30 30"><circle cx="15" cy="15" r="15" fill="#c0c4cc"/><circle cx="15" cy="10.5" r="4.5" fill="#fff"/><path d="M6 22.5 L11 16.5 L15 19.5 L19 16.5 L24 22.5 Z" fill="#fff"/></svg>
<div class="cell num" style="left:613px;top:537px;width:237px">2023-10-19 09:48:23</div>
<div class="cell num" style="left:850px;top:537px;width:237px">2024-03-05 19:18:17</div>
<div class="sw" style="left:1177px;top:537px;"><span class="l">启用</span><span class="k"></span></div>
<div class="lnk" style="left:1356px;top:537px">编辑</div>
<div class="lnk red" style="left:1400px;top:537px">删除</div>
<div class="lnk" style="left:1444px;top:537px">更多</div>
<div class="cb" style="left:21px;top:587px"></div>
<div class="mos" style="left:111px;top:590px;opacity:1"><i style="background:#cfcfd0"></i><i style="background:#c9cacc"></i><i style="background:#d3d3d3"></i><i style="background:#cfd0d2"></i><i style="background:#c6c7c9"></i><i style="background:#d5d5d5"></i><i style="background:#c3c4c6"></i><i style="background:#cdcecf"></i><i style="background:#d6d6d6"></i><i style="background:#cacbcd"></i><i style="background:#d2d2d3"></i></div>
<div class="cell num" style="left:296px;top:585px;width:237px">4</div>
<svg class="a" style="left:557px;top:580px" width="30" height="30" viewBox="0 0 30 30"><circle cx="15" cy="15" r="15" fill="#c0c4cc"/><circle cx="15" cy="10.5" r="4.5" fill="#fff"/><path d="M6 22.5 L11 16.5 L15 19.5 L19 16.5 L24 22.5 Z" fill="#fff"/></svg>
<div class="cell num" style="left:613px;top:585px;width:237px">2023-10-19 09:59:38</div>
<div class="cell num" style="left:850px;top:585px;width:237px">2023-10-19 09:59:42</div>
<div class="sw" style="left:1177px;top:585px;"><span class="l">启用</span><span class="k"></span></div>
<div class="lnk" style="left:1356px;top:585px">编辑</div>
<div class="lnk red" style="left:1400px;top:585px">删除</div>
<div class="lnk" style="left:1444px;top:585px">更多</div>
<div class="a" style="left:203px;top:182.5px;width:34.92849839314596px;height:7px;background:#fff;border-radius:3.5px;transform-origin:0 50%;transform:rotate(13.240519915187205deg);filter:blur(1px);opacity:0.95"></div>
<div class="a" style="left:109px;top:234.0px;width:44.553338819890925px;height:6px;background:#fff;border-radius:3.0px;transform-origin:0 50%;transform:rotate(-9.03948280335512deg);filter:blur(1px);opacity:0.95"></div>
<div class="a" style="left:143px;top:280.0px;width:44.181444068749045px;height:6px;background:#fff;border-radius:3.0px;transform-origin:0 50%;transform:rotate(-5.194428907734806deg);filter:blur(1px);opacity:0.95"></div>
<div class="a" style="left:43px;top:327.5px;width:128.01562404644207px;height:7px;background:#fff;border-radius:3.5px;transform-origin:0 50%;transform:rotate(-0.8951737102110744deg);filter:blur(1px);opacity:0.95"></div>
<div class="a" style="left:133px;top:376.5px;width:74.54528824815154px;height:7px;background:#fff;border-radius:3.5px;transform-origin:0 50%;transform:rotate(-6.9343489012695585deg);filter:blur(1px);opacity:0.95"></div>
<div class="a" style="left:203px;top:422.0px;width:44.10215414239989px;height:6px;background:#fff;border-radius:3.0px;transform-origin:0 50%;transform:rotate(3.90049374238189deg);filter:blur(1px);opacity:0.95"></div>
<div class="a" style="left:73px;top:449.5px;width:100.0199980003999px;height:9px;background:#fff;border-radius:4.5px;transform-origin:0 50%;transform:rotate(11.534620653644716deg);filter:blur(1px);opacity:0.95"></div>
<div class="a" style="left:153px;top:517.0px;width:150.0133327407934px;height:6px;background:#fff;border-radius:3.0px;transform-origin:0 50%;transform:rotate(0.763898460929995deg);filter:blur(1px);opacity:0.95"></div>
<div class="a" style="left:1px;top:554.0px;width:150.4027925272666px;height:12px;background:#fff;border-radius:6.0px;transform-origin:0 50%;transform:rotate(4.194182788390857deg);filter:blur(1px);opacity:0.95"></div>
</div>
<div class="t" style="left:253px;top:898px;font-size:12px">共 <span style="font-size:11px;-webkit-text-stroke:0">1088</span> 条记录</div>
<div class="a" style="left:343px;top:894px;width:84px;height:28px;border:1px solid #d9d9d9;border-radius:4px;background:#fff"></div>
<div class="t" style="left:355px;top:898px;font-size:12px"><span style="-webkit-text-stroke:0">20</span>条/页</div>
<svg class="a" style="left:408px;top:904px" width="11" height="8" viewBox="0 0 11 8"><path d="M1 1.5h9L5.5 7z" fill="#a8abb2"/></svg>
<svg class="a" style="left:1423px;top:900px" width="16" height="16" viewBox="0 0 16 16" fill="none" stroke="#a8abb2" stroke-width="1.4"><path d="M4 3v10M12 3L7 8l5 5"/></svg>
<svg class="a" style="left:1454px;top:900px" width="16" height="16" viewBox="0 0 16 16" fill="none" stroke="#a8abb2" stroke-width="1.4"><path d="M8 3L3 8l5 5M13 3L8 8l5 5"/></svg>
<svg class="a" style="left:1486px;top:900px" width="16" height="16" viewBox="0 0 16 16" fill="none" stroke="#a8abb2" stroke-width="1.4"><path d="M10 3L5 8l5 5"/></svg>
<div class="a" style="left:1514px;top:895px;width:25px;height:26px;border-radius:4px;background:#006be6;color:#fff;text-align:center;line-height:26px;font-size:13px;font-weight:bold">1</div>
<div class="t" style="left:1546px;top:899px;width:24px;text-align:center;font-size:13px;-webkit-text-stroke:0">2</div>
<div class="t" style="left:1578px;top:899px;width:24px;text-align:center;font-size:13px;-webkit-text-stroke:0">3</div>
<div class="t" style="left:1610px;top:899px;width:24px;text-align:center;font-size:13px;-webkit-text-stroke:0">4</div>
<div class="t" style="left:1642px;top:899px;width:24px;text-align:center;font-size:13px;-webkit-text-stroke:0">5</div>
<svg class="a" style="left:1678px;top:900px" width="16" height="16" viewBox="0 0 16 16" fill="none" stroke="#333" stroke-width="1.4"><path d="M6 3l5 5-5 5"/></svg>
<svg class="a" style="left:1709px;top:900px" width="16" height="16" viewBox="0 0 16 16" fill="none" stroke="#333" stroke-width="1.4"><path d="M3 3l5 5-5 5M8 3l5 5-5 5"/></svg>
<svg class="a" style="left:1741px;top:900px" width="16" height="16" viewBox="0 0 16 16" fill="none" stroke="#333" stroke-width="1.4"><path d="M4 3l5 5-5 5M12 3v10"/></svg>
<svg class="a" style="left:0;top:0" width="1789" height="942" viewBox="0 0 1789 942" fill="none" stroke="#cfcfcf" stroke-width="1"><path d="M0.5 9 Q0.5 0.5 9 0.5"/><path d="M0.5 933 Q0.5 941.5 9 941.5"/><path d="M1780 0.5 Q1788.5 0.5 1788.5 9"/><path d="M1780 941.5 Q1788.5 941.5 1788.5 933"/></svg>
</body></html>
